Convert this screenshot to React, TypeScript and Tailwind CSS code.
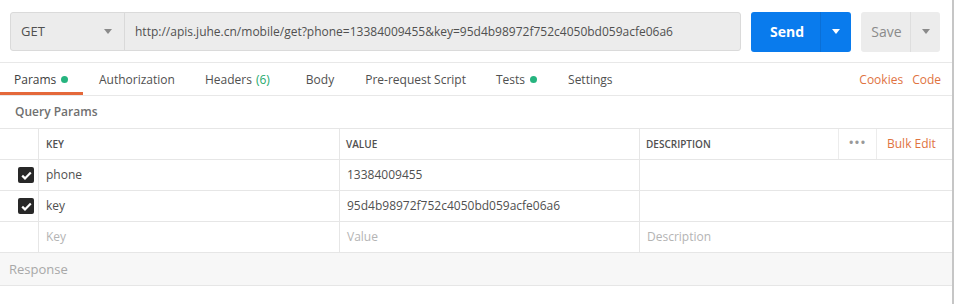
import React from 'react'

const Caret = ({ className }: { className?: string }) => (
  <svg width="8" height="5" viewBox="0 0 8 5" className={className}>
    <path d="M0 0h8L4 5z" fill="currentColor" />
  </svg>
)

const Check = () => (
  <div className="w-[16px] h-[16px] rounded-[2px] bg-[#282828] flex items-center justify-center">
    <svg width="11" height="9" viewBox="0 0 11 9">
      <path d="M1.2 4.6l2.8 2.8L9.8 1.4" stroke="#fff" strokeWidth="2.2" fill="none" />
    </svg>
  </div>
)

const Dot = () => <span className="inline-block w-[7px] h-[7px] rounded-full bg-[#26b47f] ml-[5px] mb-[1px]" />

const rows = [
  { key: 'phone', value: '13384009455' },
  { key: 'key', value: '95d4b98972f752c4050bd059acfe06a6' },
]

export default function App() {
  return (
    <div className="w-[957px] h-[304px] bg-white flex overflow-hidden text-[#505050]" style={{ fontFamily: '"Open Sans", "Noto Sans", sans-serif' }}>
      <div className="w-[952px] flex flex-col">
        {/* url bar */}
        <div className="h-[62px] flex items-center px-[10px] pt-[1px]">
          <div className="w-[731px] h-[39px] flex border border-[#dadada] bg-[#ececec] rounded-[3px]">
            <div className="w-[114px] flex items-center justify-between pl-[10px] pr-[12px] border-r border-[#d9d9d9]">
              <span className="text-[13px]">GET</span>
              <Caret className="text-[#8a8a8a]" />
            </div>
            <div className="flex items-center pl-[10px] text-[12px]">
              http://apis.juhe.cn/mobile/get?phone=13384009455&amp;key=95d4b98972f752c4050bd059acfe06a6
            </div>
          </div>
          <div className="ml-[10px] w-[100px] h-[40px] rounded-[3px] bg-[#097bed] flex text-white">
            <div className="w-[69px] flex items-center justify-center pl-[3px] text-[14px] font-bold">Send</div>
            <div className="flex-1 flex items-center justify-center border-l border-[#0a6fd6]">
              <Caret className="text-white" />
            </div>
          </div>
          <div className="ml-[10px] w-[79px] h-[40px] rounded-[3px] bg-[#ececec] flex">
            <div className="w-[49px] flex items-center justify-center pl-[2px] text-[14px] text-[#8a8a8a]">Save</div>
            <div className="flex-1 flex items-center justify-center border-l border-[#dedede]">
              <Caret className="text-[#8a8a8a]" />
            </div>
          </div>
        </div>

        {/* tabs */}
        <div className="h-[34px] flex items-stretch border-t border-b border-[#e8e8e8] text-[12px]">
          <div className="w-[83px] pl-[14px] flex items-center border-b-[3px] border-[#e4683a] pt-[5px] text-[#404040]">
            Params<Dot />
          </div>
          <div className="ml-[16px] flex items-center pt-[2px]">Authorization</div>
          <div className="ml-[30px] flex items-center pt-[2px]">Headers <span className="ml-[4px] text-[#26a96c]">(6)</span></div>
          <div className="ml-[36px] flex items-center pt-[2px]">Body</div>
          <div className="ml-[31px] flex items-center pt-[2px]">Pre-request Script</div>
          <div className="ml-[30px] flex items-center pt-[2px]">Tests<Dot /></div>
          <div className="ml-[31px] flex items-center pt-[2px]">Settings</div>
          <div className="ml-auto pr-[11px] flex items-center gap-[9px] pt-[2px] text-[#e0733f]">
            <span>Cookies</span>
            <span>Code</span>
          </div>
        </div>

        {/* query params */}
        <div className="h-[32px] flex items-center pl-[15px] text-[12px] font-semibold text-[#707070]">Query Params</div>

        {/* table */}
        <div className="border-t border-[#e6e6e6]">
          <div className="h-[31px] flex border-b border-[#e6e6e6] text-[10px] font-semibold">
            <div className="w-[39px] border-r border-[#e6e6e6]" />
            <div className="w-[301px] flex items-center pl-[7px] border-r border-[#e6e6e6]">KEY</div>
            <div className="w-[300px] flex items-center pl-[6px] border-r border-[#e6e6e6]">VALUE</div>
            <div className="w-[199px] flex items-center pl-[6px] border-r border-[#ececec]">DESCRIPTION</div>
            <div className="w-[38px] flex items-center justify-center border-r border-[#ececec] text-[#999] text-[13px] tracking-[1px] pb-[3px]">•••</div>
            <div className="flex-1 flex items-center pl-[10px] text-[12px] font-normal text-[#e0733f]">Bulk Edit</div>
          </div>
          {rows.map((r) => (
            <div key={r.key} className="h-[31px] flex border-b border-[#e6e6e6] text-[12px]">
              <div className="w-[39px] flex items-center justify-end pr-[4px] border-r border-[#e6e6e6]"><Check /></div>
              <div className="w-[301px] flex items-center pl-[7px] border-r border-[#e6e6e6]">{r.key}</div>
              <div className="w-[300px] flex items-center pl-[7px] border-r border-[#e6e6e6]">{r.value}</div>
              <div className="flex-1" />
            </div>
          ))}
          <div className="h-[31px] flex border-b border-[#e6e6e6] text-[12px] text-[#b4b4b4]">
            <div className="w-[39px] border-r border-[#e6e6e6]" />
            <div className="w-[301px] flex items-center pl-[7px] border-r border-[#e6e6e6]">Key</div>
            <div className="w-[300px] flex items-center pl-[7px] border-r border-[#e6e6e6]">Value</div>
            <div className="flex-1 flex items-center pl-[7px]">Description</div>
          </div>
        </div>

        {/* response */}
        <div className="h-[33px] flex items-center pl-[9px] pt-[1px] bg-[#f7f7f7] border-b border-[#e6e6e6] text-[13px] text-[#a8a8a8]">Response</div>
      </div>
      <div className="w-[2px] bg-[#c6c6c6]" />
    </div>
  )
}
